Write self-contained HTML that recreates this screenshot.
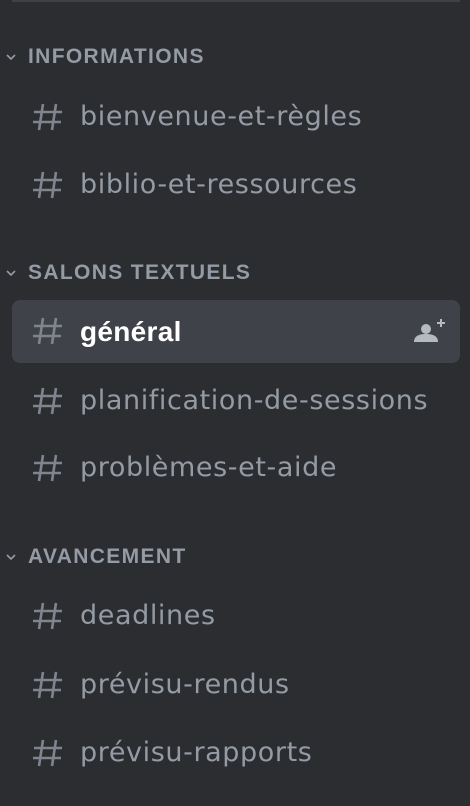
<!DOCTYPE html>
<html><head><style>
body{margin:0;width:470px;height:806px;background:#2b2d31;overflow:hidden;font-family:"Liberation Sans",sans-serif;position:relative}
.top{position:absolute;left:12px;top:0;width:448px;height:2px;background:#3f4147}
.h{position:absolute;left:28px;color:#949ba4;font-size:21px;font-weight:bold;line-height:24px;letter-spacing:1.35px}
.h svg{position:absolute;left:-23px;top:7px}
.c{position:absolute;left:12px;width:448px;height:62px;border-radius:8px}
.c .hash{position:absolute;left:20px;top:16px}
.c span{position:absolute;left:68px;top:16px;font-family:"DejaVu Sans",sans-serif;font-size:27px;line-height:30px;color:#949ba4;letter-spacing:0.6px}
.sel{background:#404249}
.sel span{color:#fff;font-weight:bold;font-family:"Liberation Sans",sans-serif;font-size:28px;letter-spacing:0.3px;top:17px}
</style></head><body>
<div class="top"></div>
<div class="h" style="top:45px"><svg width="12" height="10" viewBox="0 0 12 10"><path d="M2 3l4 4 4-4" stroke="#949ba4" stroke-width="1.6" fill="none"/></svg>INFORMATIONS</div>
<div class="c" style="top:86px"><svg class="hash" width="32" height="30" viewBox="0 0 32 30"><path d="M11 2L7 28M24 2L20 28M2 10H30M1 20H29" stroke="#80848e" stroke-width="2.6" fill="none"/></svg><span>bienvenue-et-règles</span></div>
<div class="c" style="top:154px"><svg class="hash" width="32" height="30" viewBox="0 0 32 30"><path d="M11 2L7 28M24 2L20 28M2 10H30M1 20H29" stroke="#80848e" stroke-width="2.6" fill="none"/></svg><span>biblio-et-ressources</span></div>
<div class="h" style="top:261px"><svg width="12" height="10" viewBox="0 0 12 10"><path d="M2 3l4 4 4-4" stroke="#949ba4" stroke-width="1.6" fill="none"/></svg>SALONS TEXTUELS</div>
<div class="c sel" style="top:300px;height:63px"><svg class="hash" width="32" height="30" viewBox="0 0 32 30"><path d="M11 2L7 28M24 2L20 28M2 10H30M1 20H29" stroke="#80848e" stroke-width="2.6" fill="none"/></svg><span>général</span>
<svg style="position:absolute;left:400px;top:16px" width="34" height="30" viewBox="0 0 34 30"><circle cx="14" cy="13" r="5" fill="#b5bac1"/><path d="M2 26c0-6 5-8 12-8s12 2 12 8z" fill="#b5bac1"/><path d="M29 3v8M25 7h8" stroke="#b5bac1" stroke-width="2"/></svg></div>
<div class="c" style="top:370px"><svg class="hash" width="32" height="30" viewBox="0 0 32 30"><path d="M11 2L7 28M24 2L20 28M2 10H30M1 20H29" stroke="#80848e" stroke-width="2.6" fill="none"/></svg><span>planification-de-sessions</span></div>
<div class="c" style="top:437px"><svg class="hash" width="32" height="30" viewBox="0 0 32 30"><path d="M11 2L7 28M24 2L20 28M2 10H30M1 20H29" stroke="#80848e" stroke-width="2.6" fill="none"/></svg><span>problèmes-et-aide</span></div>
<div class="h" style="top:545px"><svg width="12" height="10" viewBox="0 0 12 10"><path d="M2 3l4 4 4-4" stroke="#949ba4" stroke-width="1.6" fill="none"/></svg>AVANCEMENT</div>
<div class="c" style="top:585px"><svg class="hash" width="32" height="30" viewBox="0 0 32 30"><path d="M11 2L7 28M24 2L20 28M2 10H30M1 20H29" stroke="#80848e" stroke-width="2.6" fill="none"/></svg><span>deadlines</span></div>
<div class="c" style="top:654px"><svg class="hash" width="32" height="30" viewBox="0 0 32 30"><path d="M11 2L7 28M24 2L20 28M2 10H30M1 20H29" stroke="#80848e" stroke-width="2.6" fill="none"/></svg><span>prévisu-rendus</span></div>
<div class="c" style="top:722px"><svg class="hash" width="32" height="30" viewBox="0 0 32 30"><path d="M11 2L7 28M24 2L20 28M2 10H30M1 20H29" stroke="#80848e" stroke-width="2.6" fill="none"/></svg><span>prévisu-rapports</span></div>
</body></html>
